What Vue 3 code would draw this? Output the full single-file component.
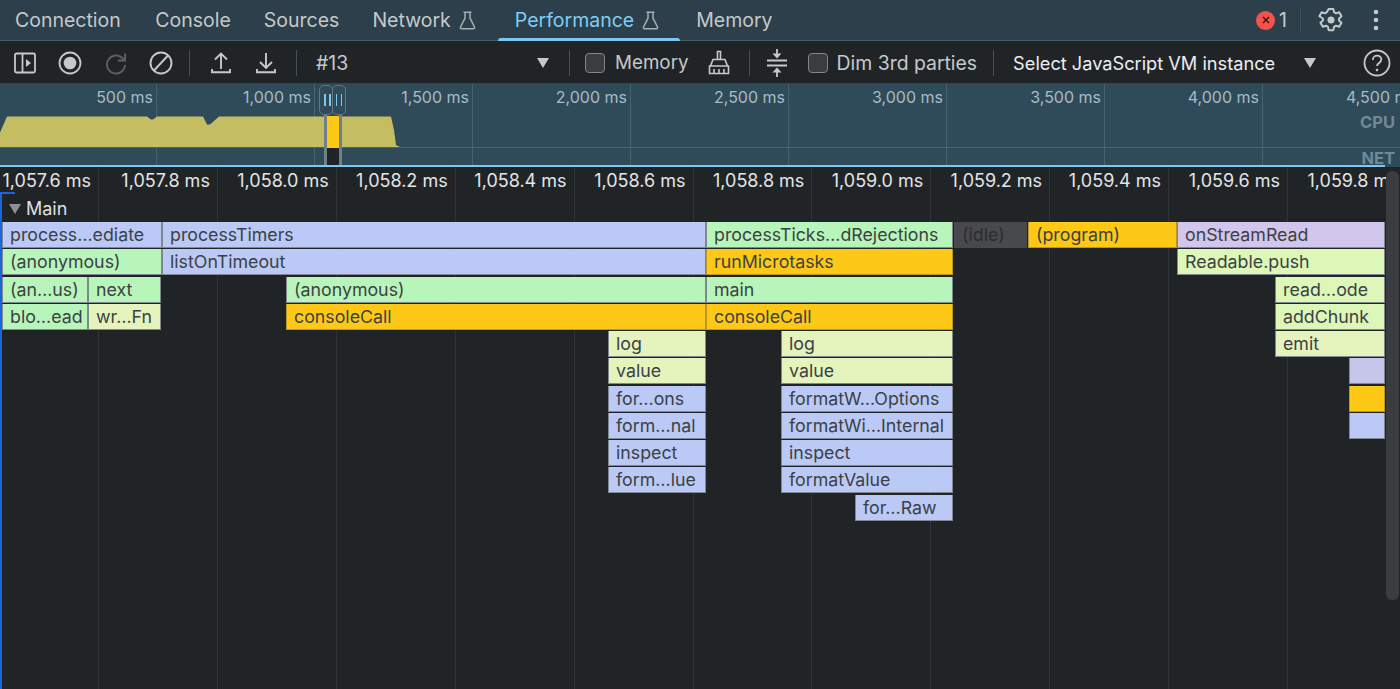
<script setup>
const C = { b: 'blue', g: 'green', y: 'yellow', l: 'lime', w: 'wheat', p: 'purple', q: 'lilac', i: 'idle' }
const rows = [
  [[2,160,'process…ediate','b'],[162,544,'processTimers','b'],[706,247,'processTicks…dRejections','g'],[954,73,'(idle)','i'],[1028,149,'(program)','y'],[1177,208,'onStreamRead','p']],
  [[2,160,'(anonymous)','g'],[162,544,'listOnTimeout','b'],[706,247,'runMicrotasks','y'],[1177,208,'Readable.push','l']],
  [[2,86,'(an…us)','g'],[88,73,'next','g'],[286,420,'(anonymous)','g'],[706,247,'main','g'],[1275,110,'read…ode','l']],
  [[2,86,'blo…ead','g'],[88,73,'wr…Fn','w'],[286,420,'consoleCall','y'],[706,247,'consoleCall','y'],[1275,110,'addChunk','l']],
  [[608,98,'log','w'],[781,172,'log','w'],[1275,110,'emit','w']],
  [[608,98,'value','w'],[781,172,'value','w'],[1349,36,'','q']],
  [[608,98,'for…ons','b'],[781,172,'formatW…Options','b'],[1349,36,'','y']],
  [[608,98,'form…nal','b'],[781,172,'formatWi…Internal','b'],[1349,36,'','b']],
  [[608,98,'inspect','b'],[781,172,'inspect','b']],
  [[608,98,'form…lue','b'],[781,172,'formatValue','b']],
  [[855,98,'for…Raw','b']],
]
const ruler = ['1,057.6','1,057.8','1,058.0','1,058.2','1,058.4','1,058.6','1,058.8','1,059.0','1,059.2','1,059.4','1,059.6','1,059.8']
const overview = ['500','1,000','1,500','2,000','2,500','3,000','3,500','4,000','4,500']
const tabs = [
  { t: 'Connection' }, { t: 'Console' }, { t: 'Sources' }, { t: 'Network', flask: true },
  { t: 'Performance', flask: true, active: true }, { t: 'Memory' },
]
const barStyle = (b) => ({ left: b[0] + 'px', width: b[1] + 'px' })
const gridStyle = (i) => ({ left: 98 + i * 118.9 + 'px' })
const ovStyle = (i) => ({ left: 156 + i * 158 + 'px' })
</script>

<template>
  <div class="app">
    <header class="tabbar">
      <div v-for="tab in tabs" :key="tab.t" class="tab" :class="{ active: tab.active }">
        <span>{{ tab.t }}</span>
        <svg v-if="tab.flask" class="flask" width="17" height="19" viewBox="0 0 17 19" fill="none" stroke="currentColor" stroke-width="1.5">
          <path d="M4.500 1.200h8M6 1.200v6L1.500 16c-.4.9.1 1.700 1 1.700h12c.9 0 1.400-.8 1-1.700L11 7.200v-6" />
        </svg>
      </div>
      <div class="tabbar-right">
        <span class="err"><svg width="12" height="12" viewBox="0 0 12 12" stroke="#3b1512" stroke-width="1.4"><path d="M3 3l6 6M9 3l-6 6"/></svg></span>
        <span class="err-count">1</span>
        <span class="tab-sep"></span>
        <svg class="gear" width="28" height="28" viewBox="0 0 24 24" fill="none" stroke="#c5c9cb" stroke-width="1.700" stroke-linejoin="round">
          <path d="M10 2.500h4l.6 2.800 1.700 1 2.700-.9 2 3.400-2.100 1.900v1.800l2.100 1.900-2 3.400-2.700-.9-1.700 1-.6 2.800h-4l-.6-2.800-1.700-1-2.700.9-2-3.400 2.100-1.900v-1.800L2 8.800l2-3.400 2.700.9 1.700-1z"/>
          <circle cx="12" cy="12" r="3" fill="#c5c9cb" stroke="none"/>
        </svg>
        <svg class="dots" width="6" height="22" viewBox="0 0 6 22" fill="#c5c9cb"><circle cx="3" cy="3" r="2.300"/><circle cx="3" cy="11" r="2.300"/><circle cx="3" cy="19" r="2.300"/></svg>
      </div>
    </header>

    <div class="toolbar">
      <svg class="i i1" width="24" height="24" viewBox="0 0 24 24" fill="none" stroke="#c5c9cb" stroke-width="1.800"><rect x="2" y="2.500" width="20" height="19" rx="1.500"/><path d="M9.500 2.500v19"/><path d="M13 8l5 4-5 4z" fill="#c5c9cb" stroke="none"/></svg>
      <svg class="i i2" width="24" height="24" viewBox="0 0 24 24" fill="none" stroke="#c5c9cb" stroke-width="1.800"><circle cx="12" cy="12" r="10.500"/><circle cx="12" cy="12" r="6.300" fill="#c5c9cb" stroke="none"/></svg>
      <svg class="i i3" width="24" height="24" viewBox="0 0 24 24" fill="none" stroke="#5c6063" stroke-width="1.900"><path d="M19.800 9A9 9 0 1 0 21 14"/><path d="M21 2.500V9.500h-7" /></svg>
      <svg class="i i4" width="24" height="24" viewBox="0 0 24 24" fill="none" stroke="#c5c9cb" stroke-width="1.900"><circle cx="12" cy="12" r="10.500"/><path d="M5 19.500L19 4.500"/></svg>
      <span class="sep s1"></span>
      <svg class="i i5" width="22" height="24" viewBox="0 0 22 24" fill="none" stroke="#c5c9cb" stroke-width="1.900"><path d="M11 18V3M5 8.500L11 2.500l6 6M2 18v3.300h18V18"/></svg>
      <svg class="i i6" width="22" height="24" viewBox="0 0 22 24" fill="none" stroke="#c5c9cb" stroke-width="1.900"><path d="M11 2v15M5 11l6 6 6-6M2 18v3.300h18V18"/></svg>
      <span class="sep s2"></span>
      <span class="rec">#13</span>
      <span class="arrow a1"></span>
      <span class="sep s3"></span>
      <span class="check c1"></span>
      <span class="lbl mem">Memory</span>
      <svg class="i i7" width="24" height="26" viewBox="0 0 24 26" fill="none" stroke="#c5c9cb" stroke-width="1.600"><path d="M10.500 1.500h3v8h-3zM6 9.500h12l2.500 6.500h-17zM2.500 16h19v7.500h-19zM7 23.500V19M12 23.500V19M17 23.500V19"/></svg>
      <span class="sep s4"></span>
      <svg class="i i8" width="22" height="28" viewBox="0 0 22 28" fill="none" stroke="#c5c9cb"><path d="M11 0v6" stroke-width="1.800"/><path d="M6.500 4.500L11 9.500l4.500-5z" fill="#c5c9cb" stroke="none"/><path d="M1 11.500h20M1 16.500h20" stroke-width="2"/><path d="M11 28v-6" stroke-width="1.800"/><path d="M6.500 23.500L11 18.500l4.500 5z" fill="#c5c9cb" stroke="none"/></svg>
      <span class="check c2"></span>
      <span class="lbl dim">Dim 3rd parties</span>
      <span class="sep s5"></span>
      <span class="select">Select JavaScript VM instance</span>
      <span class="arrow a2"></span>
      <svg class="i i9" width="28" height="28" viewBox="0 0 28 28" fill="none" stroke="#c5c9cb" stroke-width="1.800"><circle cx="14" cy="14" r="12.500"/><path d="M9.800 11c0-2.600 2-4.300 4.300-4.300s4.200 1.600 4.200 3.900c0 3.300-4.300 3.400-4.300 6.400"/><circle cx="14" cy="21" r="1.300" fill="#c5c9cb" stroke="none"/></svg>
    </div>

    <section class="overview">
      <span v-for="(l, i) in overview" :key="l" class="ov-grid" :style="ovStyle(i)"><span class="ov-label">{{ l }} ms</span></span>
      <svg class="cpu" width="410" height="34" viewBox="0 0 410 34"><path d="M0 17.500L7 1.500H147L151 4.500H153L157 1.500H203L207 9.500H210L219 1.500H391L394 15L396 30L401 32.500V33H0z" fill="#c4bd62"/></svg>
      <span class="ov-line"></span>
      <span class="sel-fill"></span>
      <span class="sel-dark"></span>
      <span class="sel-bar b1"></span>
      <span class="sel-bar b2"></span>
      <span class="handle h1"><i></i><i></i></span>
      <span class="handle h2"><i></i><i></i></span>
      <span class="tag t-cpu">CPU</span>
      <span class="tag t-net">NET</span>
      <span class="ov-edge"></span>
    </section>

    <main class="timeline">
      <span v-for="(r, i) in ruler" :key="'g' + r" class="grid" :style="gridStyle(i)"></span>
      <div class="ruler">
        <span v-for="r in ruler" :key="r" class="tick">{{ r }} ms</span>
      </div>
      <div class="track-head"><span class="tri"></span>Main</div>
      <div class="flame">
        <div v-for="(row, ri) in rows" :key="ri" class="row">
          <div v-for="b in row" :key="b[0]" class="bar" :class="C[b[3]]" :style="barStyle(b)">{{ b[2] }}</div>
        </div>
      </div>
      <span class="focus-top"></span>
      <span class="focus-left"></span>
      <div class="scrollbar"><span class="thumb"></span></div>
    </main>
  </div>
</template>

<style>
html, body { margin: 0; background: #202427; overflow: hidden; }
</style>

<style scoped>
.app { width: 1400px; height: 689px; display: flex; flex-direction: column; font-family: Inter, "Liberation Sans", sans-serif; background: #202427; overflow: hidden; }

.tabbar { height: 41px; box-sizing: border-box; display: flex; align-items: stretch; background: #2c3f4a; border-bottom: 1px solid #4a5f6b; color: #c5c9cb; font-size: 19.500px; }
.tab { display: flex; align-items: center; gap: 8px; padding: 0 16.500px; position: relative; }
.tab:first-child { padding-left: 15px; padding-right: 18px; }
.tab .flask { color: #a9aeb1; margin-right: 6px; }
.tab.active .flask { margin-right: 4px; }
.tab.active { color: #7fcdf8; }
.tab.active::after { content: ""; position: absolute; left: 0; right: 0; bottom: -1px; height: 3px; border-radius: 3px 3px 0 0; background: #7cc8f0; }
.tabbar-right { margin-left: auto; display: flex; align-items: center; }
.err { width: 19px; height: 19px; border-radius: 50%; background: #f5524a; display: flex; align-items: center; justify-content: center; }
.err-count { margin-left: 4px; width: 10px; }
.tab-sep { width: 1px; height: 26px; background: #3d505a; margin: 0 16px 0 11px; }
.dots { margin: 0 21px 0 28px; }

.toolbar { height: 43px; box-sizing: border-box; display: flex; align-items: center; background: #202427; border-bottom: 1px solid #2f4552; color: #c5c9cb; font-size: 18.800px; padding: 1px 0 0 13px; }
.i { flex: none; }
.i2 { margin-left: 21px; }
.i3 { margin-left: 22px; }
.i4 { margin-left: 21px; }
.sep { width: 1px; height: 26px; background: #42525b; flex: none; }
.s1 { margin-left: 16px; }
.i5 { margin-left: 20px; }
.i6 { margin-left: 23px; }
.s2 { margin-left: 19px; }
.rec { margin-left: 19px; width: 221px; font-size: 19.500px; }
.arrow { width: 0; height: 0; border-left: 6.500px solid transparent; border-right: 6.500px solid transparent; border-top: 10px solid #c5c9cb; flex: none; }
.s3 { margin-left: 19.500px; }
.check { width: 20px; height: 20px; box-sizing: border-box; border: 1.500px solid #80868a; border-radius: 4px; background: #3a3d40; flex: none; }
.c1 { margin-left: 15.500px; margin-right: 10px; }
.c2 { margin-left: 20px; margin-right: 9px; }
.lbl { white-space: nowrap; }
.dim { font-size: 19.400px; }
.i7 { margin-left: 18px; }
.s4 { margin-left: 18px; }
.i8 { margin-left: 16px; }
.s5 { margin-left: 16px; }
.select { margin-left: 19px; color: #eceeef; white-space: nowrap; font-size: 18.200px; }
.a2 { margin-left: 28.500px; }
.i9 { margin-left: 47.500px; }

.overview { height: 83px; flex: none; position: relative; background: #2f4a58; overflow: hidden; }
.ov-grid { position: absolute; top: 0; bottom: 0; width: 1px; background: #48626f; }
.ov-label { position: absolute; right: 4px; top: 3px; color: #a9bcc5; font-size: 16px; white-space: nowrap; }
.cpu { position: absolute; left: 0; top: 31px; }
.ov-line { position: absolute; left: 0; right: 0; top: 63px; height: 1px; background: #4c636f; }
.sel-fill { position: absolute; left: 327px; width: 12px; top: 32px; height: 32px; background: #fdc916; }
.sel-dark { position: absolute; left: 327px; width: 12px; top: 64px; bottom: 0; background: #202427; }
.sel-bar { position: absolute; width: 3px; top: 31px; bottom: 0; background: #6f8089; }
.b1 { left: 324px; }
.b2 { left: 339px; }
.handle { position: absolute; top: 1px; width: 14px; height: 30px; box-sizing: border-box; border: 1.500px solid #66787f; border-radius: 5px; display: flex; justify-content: center; align-items: center; gap: 3.500px; }
.handle i { width: 1.500px; height: 12px; background: #7cc8f0; }
.h1 { left: 319px; padding-left: 3px; }
.h2 { left: 332px; }
.tag { position: absolute; right: 5px; color: #6f8b99; font-size: 16.500px; font-weight: 700; }
.t-cpu { top: 28px; }
.t-net { top: 64px; }
.ov-edge { position: absolute; left: 0; bottom: 0; width: 1385px; height: 2px; background: #7cc8f0; }

.timeline { flex: 1; position: relative; overflow: hidden; }
.grid { position: absolute; top: 0; bottom: 0; width: 1px; background: #2f3437; }
.ruler { height: 28px; display: flex; position: relative; }
.tick { flex: none; width: 118.900px; color: #e3e5e6; font-size: 18px; line-height: 27px; text-align: right; box-sizing: border-box; padding-right: 7px; white-space: nowrap; }
.tick:first-child { width: 98px; }
.track-head { height: 27px; display: flex; align-items: center; color: #dfe1e2; font-size: 18px; position: relative; padding-left: 9px; }
.tri { width: 0; height: 0; border-left: 6px solid transparent; border-right: 6px solid transparent; border-top: 10px solid #8d9194; margin-right: 5px; }
.flame { position: relative; }
.row { height: 27.250px; position: relative; }
.bar { position: absolute; top: 0; height: 26px; box-sizing: border-box; padding-left: 7px; font-size: 17.800px; line-height: 26px; color: #3c4145; white-space: nowrap; overflow: hidden; border: 1px solid #7f8890; border-top: 0; }
.blue { background: #bac9f5; }
.green { background: #b8f5ba; }
.yellow { background: #fdc916; border-color: #b9952a; }
.lime { background: #dcf7b8; }
.wheat { background: #e5f3bd; }
.purple { background: #d2c6ec; }
.lilac { background: #c5c6e9; }
.idle { background: #48494b; color: #2b2d2f; border: 0; padding-left: 8px; }
.focus-top { position: absolute; left: 0; top: 25px; width: 15px; height: 2px; background: #1a66d6; }
.focus-left { position: absolute; left: 0; top: 25px; bottom: 0; width: 2px; background: #1a66d6; }
.scrollbar { position: absolute; right: 0; top: 0; bottom: 0; width: 14px; background: #202427; }
.thumb { position: absolute; left: 0; right: 1px; top: 4px; height: 429px; border-radius: 6px; background: #3a3d3f; }
</style>
